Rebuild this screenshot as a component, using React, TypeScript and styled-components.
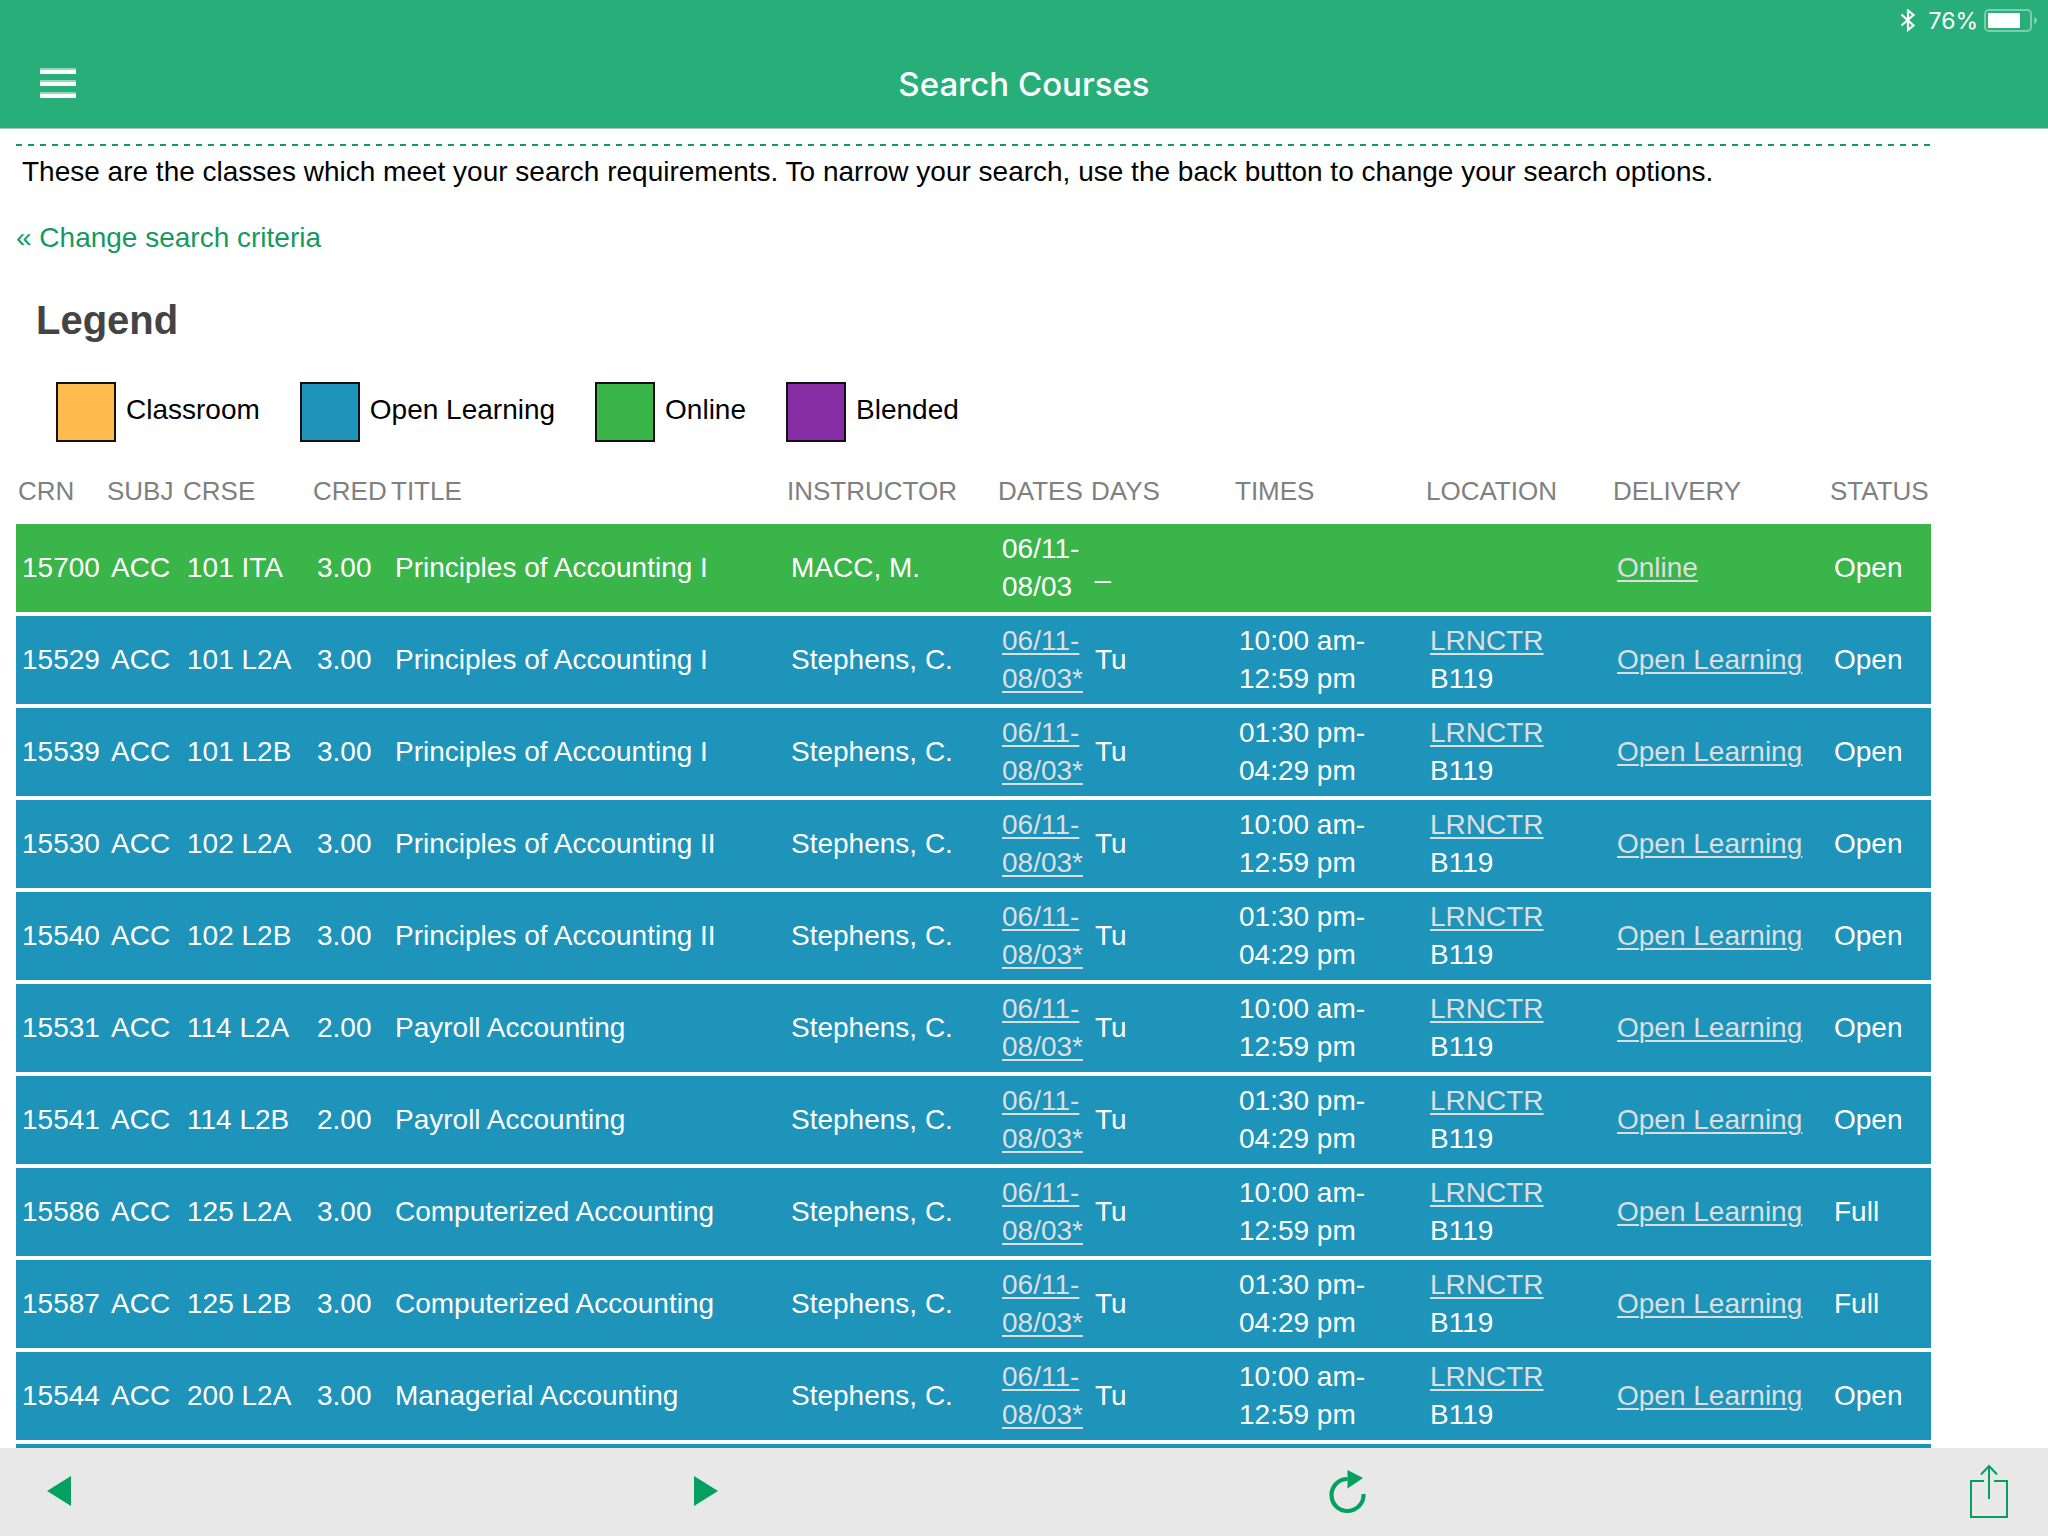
import React from 'react';
import styled, { createGlobalStyle } from 'styled-components';

const colors = {
  brand: '#27ae79',
  link: '#15995f',
  icon: '#04a05f',
  classroom: '#ffbb4d',
  openLearning: '#1e94ba',
  online: '#3ab54a',
  blended: '#872ea5',
};

const sans = `"Liberation Sans", Arial, Helvetica, sans-serif`;
const system = `Inter, "Liberation Sans", sans-serif`;

const GlobalStyle = createGlobalStyle`
  * { box-sizing: border-box; }
  body { margin: 0; background: #fff; }
`;

const Screen = styled.div`
  display: flex;
  flex-direction: column;
  height: 100vh;
  font-family: ${sans};
  font-size: 28px;
  line-height: 38px;
  color: #000;
`;

const Header = styled.header`
  flex: none;
  background: ${colors.brand};
  border-bottom: 1px solid #a3c6b5;
  color: #fff;
  font-family: ${system};
`;

const StatusBar = styled.div`
  display: flex;
  align-items: center;
  justify-content: flex-end;
  height: 40px;
  padding: 2px 10px 0 0;
  font-size: 23px;
`;

const BatteryLevel = styled.span`
  margin: 0 6px 0 12px;
`;

const NavBar = styled.div`
  display: grid;
  grid-template-columns: 1fr auto 1fr;
  align-items: center;
  height: 88px;
  padding: 0 30px;
`;

const IconButton = styled.button`
  display: flex;
  align-items: center;
  justify-content: center;
  width: 56px;
  height: 64px;
  padding: 0;
  border: 0;
  background: none;
  color: inherit;
  cursor: pointer;
`;

const PageTitle = styled.h1`
  margin: 0;
  font-size: 33px;
  font-weight: 500;
  line-height: 40px;
`;

const Content = styled.main`
  flex: 1;
  min-height: 0;
  overflow-y: auto;
  scrollbar-width: none;
  padding: 15px 117px 0 16px;
`;

const DashedRule = styled.div`
  height: 2px;
  margin-bottom: 7px;
  background: repeating-linear-gradient(to right, ${colors.link} 0 6px, transparent 6px 12px);
`;

const Intro = styled.p`
  margin: 0 6px 28px;
`;

const BackLink = styled.a`
  color: ${colors.link};
  text-decoration: none;
`;

const LegendTitle = styled.h2`
  margin: 37px 20px 36px;
  font-size: 40px;
  line-height: 52px;
  color: #444;
`;

const Legend = styled.ul`
  display: flex;
  gap: 40px;
  margin: 0 40px 16px;
  padding: 0;
  list-style: none;
`;

const LegendItem = styled.li`
  display: flex;
  align-items: center;
  gap: 10px;
`;

const Swatch = styled.span<{ $color: string }>`
  width: 60px;
  height: 60px;
  border: 2px solid #111;
  background: ${(p) => p.$color};
`;

const LegendLabel = styled.span`
  padding-bottom: 4px;
`;

const CourseTable = styled.table`
  width: 100%;
  table-layout: fixed;
  border-collapse: separate;
  border-spacing: 0;
`;

const Column = styled.col<{ $width?: number }>`
  width: ${(p) => (p.$width ? `${p.$width}px` : 'auto')};
`;

const HeadCell = styled.th`
  padding: 14px 0 14px 2px;
  font-size: 26px;
  font-weight: 400;
  text-align: left;
  white-space: nowrap;
  color: #808080;
`;

const CourseRow = styled.tr<{ $color: string }>`
  background: ${(p) => p.$color};
  color: #fff;
`;

const Cell = styled.td`
  height: 92px;
  padding: 6px 0 6px 6px;
  border-bottom: 4px solid #fff;
  vertical-align: middle;
  white-space: nowrap;
`;

const CellLink = styled.a`
  color: #dcdfe1;
  text-decoration: underline;
  text-decoration-thickness: 2px;
  text-underline-offset: 3px;
`;

const Toolbar = styled.footer`
  flex: none;
  display: flex;
  align-items: center;
  justify-content: space-between;
  height: 88px;
  padding: 0 31px;
  background: #e8e8e8;
  color: ${colors.icon};
`;

const legend = [
  { label: 'Classroom', color: colors.classroom },
  { label: 'Open Learning', color: colors.openLearning },
  { label: 'Online', color: colors.online },
  { label: 'Blended', color: colors.blended },
];

const columns: { label: string; width?: number }[] = [
  { label: 'CRN', width: 89 },
  { label: 'SUBJ', width: 76 },
  { label: 'CRSE', width: 130 },
  { label: 'CRED', width: 78 },
  { label: 'TITLE' },
  { label: 'INSTRUCTOR', width: 211 },
  { label: 'DATES', width: 93 },
  { label: 'DAYS', width: 144 },
  { label: 'TIMES', width: 191 },
  { label: 'LOCATION', width: 187 },
  { label: 'DELIVERY', width: 217 },
  { label: 'STATUS', width: 103 },
];

interface Course {
  crn: string;
  course: string;
  credits: string;
  title: string;
  instructor: string;
  times?: [string, string];
  delivery: 'Online' | 'Open Learning';
  status: string;
}

const morning: [string, string] = ['10:00 am-', '12:59 pm'];
const afternoon: [string, string] = ['01:30 pm-', '04:29 pm'];

const openLearning = (
  crn: string,
  course: string,
  credits: string,
  title: string,
  times: [string, string],
  status = 'Open',
): Course => ({
  crn, course, credits, title, times, status,
  instructor: 'Stephens, C.',
  delivery: 'Open Learning',
});

const courses: Course[] = [
  {
    crn: '15700',
    course: '101 ITA',
    credits: '3.00',
    title: 'Principles of Accounting I',
    instructor: 'MACC, M.',
    delivery: 'Online',
    status: 'Open',
  },
  openLearning('15529', '101 L2A', '3.00', 'Principles of Accounting I', morning),
  openLearning('15539', '101 L2B', '3.00', 'Principles of Accounting I', afternoon),
  openLearning('15530', '102 L2A', '3.00', 'Principles of Accounting II', morning),
  openLearning('15540', '102 L2B', '3.00', 'Principles of Accounting II', afternoon),
  openLearning('15531', '114 L2A', '2.00', 'Payroll Accounting', morning),
  openLearning('15541', '114 L2B', '2.00', 'Payroll Accounting', afternoon),
  openLearning('15586', '125 L2A', '3.00', 'Computerized Accounting', morning, 'Full'),
  openLearning('15587', '125 L2B', '3.00', 'Computerized Accounting', afternoon, 'Full'),
  openLearning('15544', '200 L2A', '3.00', 'Managerial Accounting', morning),
];

const MenuIcon = () => (
  <svg width="36" height="32" viewBox="0 0 36 32" fill="#fff" aria-hidden="true">
    {[0, 12, 24].map((y) => (
      <React.Fragment key={y}>
        <rect y={y} width="36" height="2" opacity="0.5" />
        <rect y={y + 2} width="36" height="4" />
      </React.Fragment>
    ))}
  </svg>
);

const BluetoothIcon = () => (
  <svg width="16" height="24" viewBox="0 0 16 24" fill="none" stroke="#fff" strokeWidth="2.2" aria-hidden="true">
    <path d="M1.5 5.5 L13.5 16.5 L8 21 V1.5 L13.5 6 L1.5 16.5" />
  </svg>
);

const BatteryIcon = () => (
  <svg width="54" height="24" viewBox="0 0 54 24" aria-hidden="true">
    <rect x="1" y="1" width="46" height="21" rx="4" fill="none" stroke="#fff" strokeOpacity="0.4" strokeWidth="2" />
    <rect x="4" y="4" width="32" height="15" rx="1" fill="#fff" />
    <path d="M50 8 Q53 9 53 11.5 Q53 14 50 15 Z" fill="#fff" fillOpacity="0.4" />
  </svg>
);

const BackIcon = () => (
  <svg width="48" height="56" viewBox="0 0 48 56" fill="currentColor" aria-hidden="true">
    <path d="M36 12 V42 L12 27 Z" />
  </svg>
);

const ForwardIcon = () => (
  <svg width="48" height="56" viewBox="0 0 48 56" fill="currentColor" aria-hidden="true">
    <path d="M16 12 V42 L40 27 Z" />
  </svg>
);

const ReloadIcon = () => (
  <svg width="48" height="56" viewBox="0 0 48 56" aria-hidden="true">
    <path d="M25.5 15 A16 16 0 1 0 41.5 30" fill="none" stroke="currentColor" strokeWidth="4.2" />
    <path d="M25.5 6 L41 14 L25.5 24.5 Z" fill="currentColor" />
  </svg>
);

const ShareIcon = () => (
  <svg width="48" height="56" viewBox="0 0 48 56" fill="none" stroke="currentColor" strokeWidth="2" aria-hidden="true">
    <path d="M19 17 H6 V53 H42 V17 H29" />
    <path d="M24 35 V2 M16 10.5 L24 2 L32 10.5" />
  </svg>
);

const TableRow = ({ course }: { course: Course }) => (
  <CourseRow $color={course.delivery === 'Online' ? colors.online : colors.openLearning}>
    <Cell>{course.crn}</Cell>
    <Cell>ACC</Cell>
    <Cell>{course.course}</Cell>
    <Cell>{course.credits}</Cell>
    <Cell>{course.title}</Cell>
    <Cell>{course.instructor}</Cell>
    <Cell>
      {course.times ? (
        <CellLink href="#dates">06/11-<br />08/03*</CellLink>
      ) : (
        <>06/11-<br />08/03</>
      )}
    </Cell>
    <Cell>{course.times ? 'Tu' : '_'}</Cell>
    <Cell>{course.times && <>{course.times[0]}<br />{course.times[1]}</>}</Cell>
    <Cell>{course.times && <><CellLink href="#location">LRNCTR</CellLink><br />B119</>}</Cell>
    <Cell><CellLink href="#delivery">{course.delivery}</CellLink></Cell>
    <Cell>{course.status}</Cell>
  </CourseRow>
);

export default function App() {
  return (
    <Screen>
      <GlobalStyle />
      <Header>
        <StatusBar>
          <BluetoothIcon />
          <BatteryLevel>76%</BatteryLevel>
          <BatteryIcon />
        </StatusBar>
        <NavBar>
          <IconButton type="button" aria-label="Menu"><MenuIcon /></IconButton>
          <PageTitle>Search Courses</PageTitle>
        </NavBar>
      </Header>
      <Content>
        <DashedRule />
        <Intro>
          These are the classes which meet your search requirements. To narrow your search, use the back button to change your search options.
        </Intro>
        <BackLink href="#criteria">« Change search criteria</BackLink>
        <LegendTitle>Legend</LegendTitle>
        <Legend>
          {legend.map((item) => (
            <LegendItem key={item.label}>
              <Swatch $color={item.color} />
              <LegendLabel>{item.label}</LegendLabel>
            </LegendItem>
          ))}
        </Legend>
        <CourseTable>
          <colgroup>
            {columns.map((c) => <Column key={c.label} $width={c.width} />)}
          </colgroup>
          <thead>
            <tr>{columns.map((c) => <HeadCell key={c.label} scope="col">{c.label}</HeadCell>)}</tr>
          </thead>
          <tbody>
            {courses.map((course) => <TableRow key={course.crn} course={course} />)}
            <CourseRow $color={colors.openLearning}>
              <Cell colSpan={columns.length} />
            </CourseRow>
          </tbody>
        </CourseTable>
      </Content>
      <Toolbar>
        <IconButton type="button" aria-label="Back"><BackIcon /></IconButton>
        <IconButton type="button" aria-label="Forward"><ForwardIcon /></IconButton>
        <IconButton type="button" aria-label="Reload"><ReloadIcon /></IconButton>
        <IconButton type="button" aria-label="Share"><ShareIcon /></IconButton>
      </Toolbar>
    </Screen>
  );
}
